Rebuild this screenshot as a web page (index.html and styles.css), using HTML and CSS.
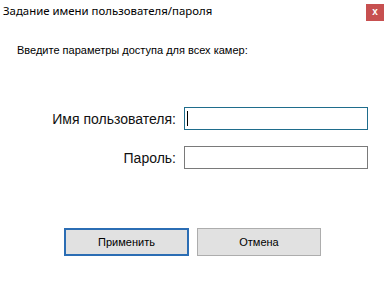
FILE: index.html
```html
<!DOCTYPE html>
<html lang="ru">
<head>
    <meta charset="UTF-8">
    <link rel="stylesheet" href="styles.css">
</head>
<body>

<div class="window">
    <div class="titlebar">
        <span class="title">Задание имени пользователя/пароля</span>
        <span class="close">x</span>
    </div>

    <p class="hint">Введите параметры доступа для всех камер:</p>

    <form class="fields">
        <label for="user">Имя пользователя:</label>
        <div class="field">
            <input type="text" id="user" class="focused">
            <span class="caret"></span>
        </div>
        <label for="pass">Пароль:</label>
        <div class="field">
            <input type="password" id="pass">
        </div>
    </form>

    <div class="buttons">
        <button class="btn default">Применить</button>
        <button class="btn">Отмена</button>
    </div>
</div>

</body>
</html>
```

FILE: styles.css
```css
body {
    margin: 0;
    background: #ffffff;
    font-family: 'Liberation Sans', Arial, sans-serif;
    color: #000000;
}

.window {
    width: 386px;
    height: 284px;
    display: flex;
    flex-direction: column;
}

.titlebar {
    display: flex;
    justify-content: space-between;
    align-items: flex-start;
    padding: 4px 2px 0 3px;
    height: 24px;
    box-sizing: border-box;
}

.title {
    font-family: 'Noto Sans', sans-serif;
    font-size: 11.4px;
    line-height: 16px;
    margin-top: -1px;
}

.close {
    width: 18px;
    height: 17px;
    background: #c75050;
    color: #ffffff;
    font-size: 10px;
    font-weight: bold;
    line-height: 15px;
    text-align: center;
}

.hint {
    font-size: 11px;
    margin: 20px 0 0 17px;
    line-height: 13px;
}

.fields {
    display: grid;
    grid-template-columns: 134px 184px;
    column-gap: 8px;
    row-gap: 16px;
    align-items: center;
    margin: 50px 0 0 42px;
}

.fields label {
    text-align: right;
    font-size: 14px;
    color: #111111;
}

.field {
    position: relative;
    height: 23px;
}

.fields input {
    width: 184px;
    height: 23px;
    box-sizing: border-box;
    border: 1px solid #7a7a7a;
    padding: 0 3px;
    outline: none;
    font-size: 13px;
}

.fields input.focused {
    border-color: #1f6d8c;
}

.caret {
    position: absolute;
    left: 3px;
    top: 4px;
    width: 1px;
    height: 15px;
    background: #000000;
}

.buttons {
    display: flex;
    gap: 8px;
    margin: 59px 0 0 64px;
}

.btn {
    width: 124px;
    height: 28px;
    box-sizing: border-box;
    background: #e1e1e1;
    border: 1px solid #adadad;
    font-family: 'Liberation Sans', Arial, sans-serif;
    font-size: 11px;
    color: #000000;
    padding: 0;
}

.btn.default {
    width: 125px;
    border: 2px solid #2b6db4;
}
```
